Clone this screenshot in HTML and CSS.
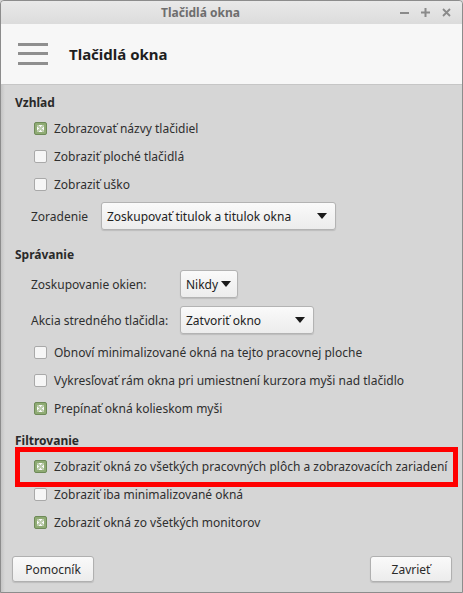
FILE: index.html
```html
<!DOCTYPE html>
<html lang="sk">
<head>
<meta charset="utf-8">
<title>Tlačidlá okna</title>
<link rel="stylesheet" href="styles.css">
</head>
<body>
<div class="window">
  <div class="titlebar">
    <span class="title">Tlačidlá okna</span>
    <div class="wm">
      <svg width="9" height="9" viewBox="0 0 9 9"><rect x="0" y="4" width="9" height="2" fill="#8a8a8a"/></svg>
      <svg width="9" height="9" viewBox="0 0 9 9"><rect x="0" y="3.5" width="9" height="2" fill="#8a8a8a"/><rect x="3.5" y="0" width="2" height="9" fill="#8a8a8a"/></svg>
      <svg width="9" height="9" viewBox="0 0 9 9"><path d="M1 1 L8 8 M8 1 L1 8" stroke="#8a8a8a" stroke-width="1.8"/></svg>
    </div>
  </div>
  <div class="header">
    <svg class="burger" width="30" height="22" viewBox="0 0 30 22"><rect y="0" width="30" height="3" fill="#8f8f8f"/><rect y="9" width="30" height="3" fill="#8f8f8f"/><rect y="19" width="30" height="3" fill="#8f8f8f"/></svg>
    <span class="htitle">Tlačidlá okna</span>
  </div>
  <div class="content">
    <div class="heading h1">Vzhľad</div>
    <div class="row"><span class="cb on"></span><span>Zobrazovať názvy tlačidiel</span></div>
    <div class="row"><span class="cb"></span><span>Zobraziť ploché tlačidlá</span></div>
    <div class="row"><span class="cb"></span><span>Zobraziť uško</span></div>
    <div class="combo-row r-order">
      <span class="label l-order">Zoradenie</span>
      <div class="combo c-order"><span>Zoskupovať titulok a titulok okna</span><span class="arrow"></span></div>
    </div>
    <div class="heading h2">Správanie</div>
    <div class="combo-row r-group">
      <span class="label l-wide">Zoskupovanie okien:</span>
      <div class="combo c-small"><span>Nikdy</span><span class="arrow"></span></div>
    </div>
    <div class="combo-row r-mid">
      <span class="label l-wide">Akcia stredného tlačidla:</span>
      <div class="combo c-mid"><span>Zatvoriť okno</span><span class="arrow"></span></div>
    </div>
    <div class="row first-after-combo"><span class="cb"></span><span>Obnoví minimalizované okná na tejto pracovnej ploche</span></div>
    <div class="row"><span class="cb"></span><span>Vykresľovať rám okna pri umiestnení kurzora myši nad tlačidlo</span></div>
    <div class="row"><span class="cb on"></span><span>Prepínať okná kolieskom myši</span></div>
    <div class="heading h3">Filtrovanie</div>
    <div class="row marked"><span class="cb on"></span><span>Zobraziť okná zo všetkých pracovných plôch a zobrazovacích zariadení</span><span class="highlight"></span></div>
    <div class="row"><span class="cb"></span><span>Zobraziť iba minimalizované okná</span></div>
    <div class="row"><span class="cb on"></span><span>Zobraziť okná zo všetkých monitorov</span></div>
  </div>
  <div class="footer">
    <button class="btn">Pomocník</button>
    <button class="btn">Zavrieť</button>
  </div>
</div>
</body>
</html>
```
FILE: styles.css
```css
* { box-sizing: border-box; }
html, body { margin: 0; padding: 0; }
body {
  width: 463px;
  height: 593px;
  font-family: "Noto Sans", "Open Sans", sans-serif;
  font-size: 12px;
  color: #2f2f2f;
  background: #d6d6d6;
  overflow: hidden;
}
.window {
  width: 463px;
  height: 593px;
  border: 1px solid #8c8c8c;
  border-radius: 4px 4px 0 0;
  background: linear-gradient(90deg, #c4c4c4 0px, #d6d6d6 4px, #d6d6d6 100%);
  display: flex;
  flex-direction: column;
}
.titlebar {
  height: 23px;
  flex: none;
  display: flex;
  align-items: center;
  position: relative;
  background: linear-gradient(#e9e9e9, #dcdcdc);
  border-radius: 3px 3px 0 0;
}
.title {
  margin-left: 160px;
  font-weight: bold;
  font-size: 12px;
  color: #6e6e6e;
}
.wm {
  margin-left: auto;
  margin-right: 11px;
  display: flex;
  gap: 12px;
  align-items: center;
}
.wm svg { display: block; }
.header {
  height: 61px;
  flex: none;
  background: #f7f7f7;
  border-bottom: 1px solid #c6c6c6;
  display: flex;
  align-items: center;
  padding-left: 17px;
}
.burger { display: block; }
.htitle {
  margin-left: 21px;
  font-weight: bold;
  font-size: 15px;
  color: #1e1e1e;
}
.content {
  flex: 1;
  padding-left: 14px;
  display: flex;
  flex-direction: column;
}
.heading {
  height: 20px;
  display: flex;
  align-items: center;
  font-weight: bold;
  color: #2a2a2a;
}
.h1 { margin-top: 7px; margin-bottom: 2px; }
.h2 { margin-top: 10px; }
.h3 { margin-top: 8px; margin-bottom: 2px; }
.row {
  height: 28px;
  display: flex;
  align-items: center;
  padding-left: 19px;
  position: relative;
}
.first-after-combo { margin-top: 2px; }
.cb {
  width: 13px;
  height: 13px;
  border: 1px solid #a9a9a9;
  border-radius: 2px;
  background: #f6f6f6;
  margin-right: 7px;
  flex: none;
}
.cb.on {
  background: #8fab74 linear-gradient(#f8f8f8, #f8f8f8) no-repeat center / 7px 7px;
  border-color: #6e8a58;
  position: relative;
}
.cb.on::after {
  content: "";
  position: absolute;
  left: 2px; top: 2px;
  width: 7px; height: 7px;
  background:
    linear-gradient(45deg, transparent 42%, #8fab74 42%, #8fab74 58%, transparent 58%),
    linear-gradient(-45deg, transparent 42%, #8fab74 42%, #8fab74 58%, transparent 58%);
  opacity: 0.55;
}
.combo-row {
  display: flex;
  align-items: center;
  padding-left: 16px;
}
.r-order { height: 36px; }
.r-group { height: 40px; }
.r-mid { height: 32px; }
.label { color: #2f2f2f; }
.l-order { width: 70px; }
.l-wide { width: 149px; }
.combo {
  height: 28px;
  border: 1px solid #b3b3b3;
  border-radius: 3px;
  background: linear-gradient(#fafafa, #ececec);
  box-shadow: 0 1px 1px rgba(0,0,0,0.12);
  display: flex;
  align-items: center;
  padding: 0 8px 0 5px;
  color: #222;
}
.arrow {
  margin-left: auto;
  width: 0; height: 0;
  border-left: 5px solid transparent;
  border-right: 5px solid transparent;
  border-top: 6px solid #1a1a1a;
}
.c-order { width: 235px; }
.c-small { width: 58px; padding-right: 6px; }
.c-mid { width: 134px; }
.highlight {
  position: absolute;
  left: 0;
  right: 4px;
  top: -5px;
  bottom: -7px;
  border: 5px solid #ff0000;
  pointer-events: none;
}
.footer {
  flex: none;
  height: 40px;
  display: flex;
  justify-content: space-between;
  align-items: flex-end;
  padding: 0 10px 10px 11px;
}
.btn {
  height: 26px;
  width: 82px;
  font-family: "Noto Sans", "Open Sans", sans-serif;
  font-size: 12px;
  color: #2a2a2a;
  border: 1px solid #b0b0b0;
  border-radius: 3px;
  background: linear-gradient(#fafafa, #ececec);
  box-shadow: 0 1px 1px rgba(0,0,0,0.12);
  padding: 0;
}
```
